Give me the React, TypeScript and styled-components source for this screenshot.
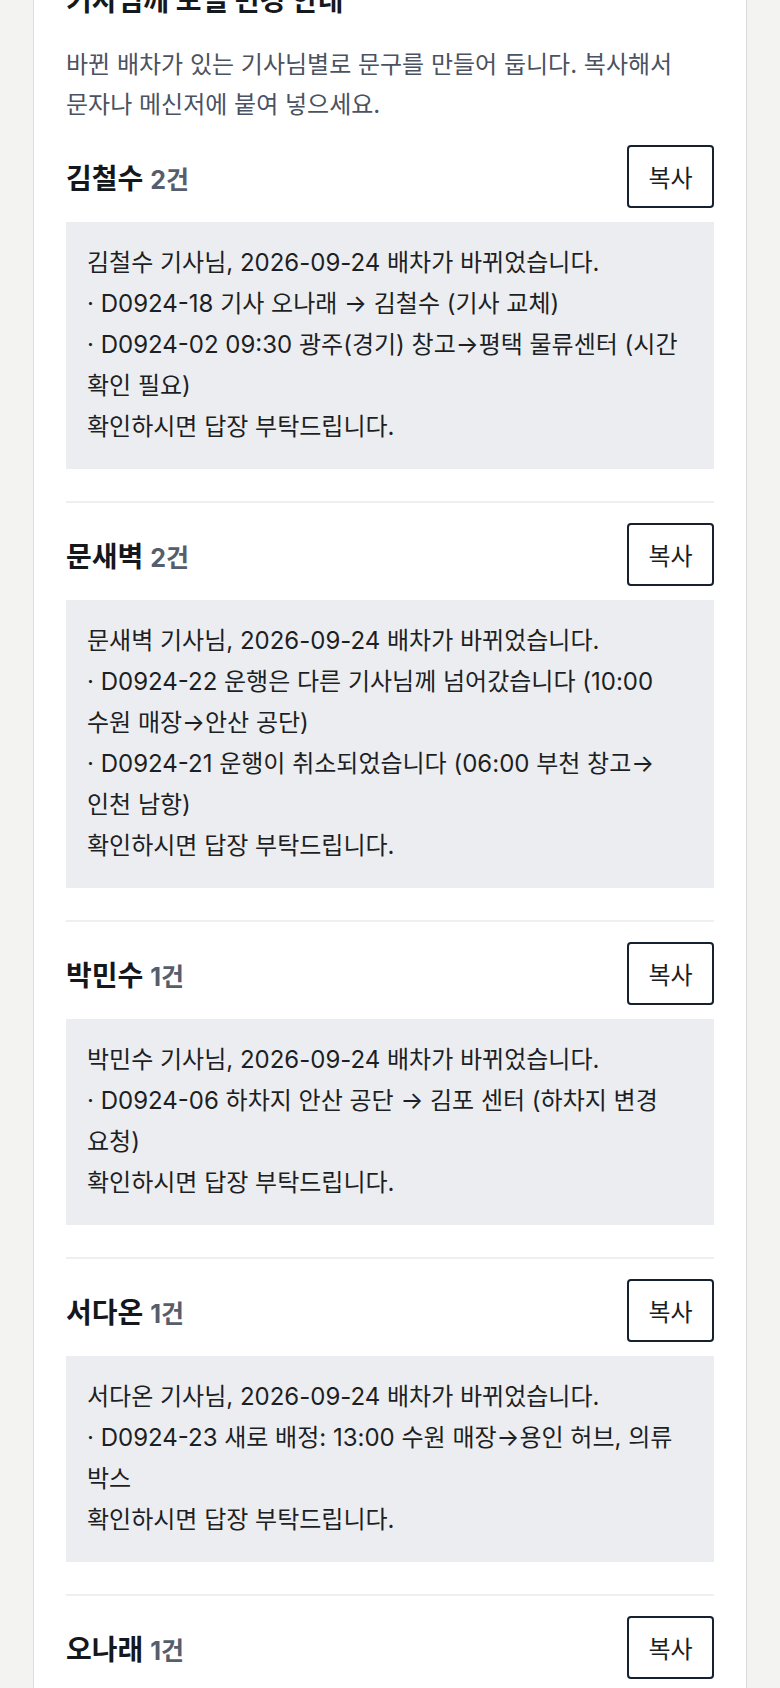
import styled, { createGlobalStyle } from "styled-components";

const GlobalStyle = createGlobalStyle`
  body {
    margin: 0;
    background: #f3f3f1;
    font-family: Inter, "Noto Sans CJK KR", "Noto Sans", sans-serif;
    color: #1c1f24;
  }
`;

type Notice = {
  driver: string;
  lines: string[];
};

const DATE = "2026-09-24";

const notices: Notice[] = [
  {
    driver: "김철수",
    lines: [
      "· D0924-18 기사 오나래 → 김철수 (기사 교체)",
      "· D0924-02 09:30 광주(경기) 창고→평택 물류센터 (시간 확인 필요)",
    ],
  },
  {
    driver: "문새벽",
    lines: [
      "· D0924-22 운행은 다른 기사님께 넘어갔습니다 (10:00 수원 매장→안산 공단)",
      "· D0924-21 운행이 취소되었습니다 (06:00 부천 창고→인천 남항)",
    ],
  },
  {
    driver: "박민수",
    lines: ["· D0924-06 하차지 안산 공단 → 김포 센터 (하차지 변경 요청)"],
  },
  {
    driver: "서다온",
    lines: ["· D0924-23 새로 배정: 13:00 수원 매장→용인 허브, 의류 박스"],
  },
  {
    driver: "오나래",
    lines: ["· D0924-18 운행은 다른 기사님께 넘어갔습니다 (07:30 평택 물류센터→김포 센터)"],
  },
];

const App = () => {
  return (
    <>
      <GlobalStyle />
      <Page>
        <Card>
          <Title>기사님께 보낼 변경 안내</Title>
          <Description>
            바뀐 배차가 있는 기사님별로 문구를 만들어 둡니다. 복사해서 문자나 메신저에 붙여 넣으세요.
          </Description>
          {notices.map((n) => (
            <Section key={n.driver}>
              <Header>
                <Name>
                  {n.driver}
                  <Count>{n.lines.length}건</Count>
                </Name>
                <CopyButton type="button">복사</CopyButton>
              </Header>
              <MessageBox>
                <Line>
                  {n.driver} 기사님, {DATE} 배차가 바뀌었습니다.
                </Line>
                {n.lines.map((l) => (
                  <Line key={l}>{l}</Line>
                ))}
                <Line>확인하시면 답장 부탁드립니다.</Line>
              </MessageBox>
            </Section>
          ))}
        </Card>
      </Page>
    </>
  );
};

export default App;

const Page = styled.div`
  padding: 0 33px;
`;

const Card = styled.div`
  margin-top: -17px;
  background: #fff;
  border-left: 1px solid #dcdcdc;
  border-right: 1px solid #dcdcdc;
  padding: 0 32px;
`;

const Title = styled.h2`
  margin: 0;
  font-size: 28px;
  line-height: 36px;
  font-weight: 700;
  color: #15181d;
`;

const Description = styled.p`
  margin: 26px 0 0;
  font-size: 24px;
  line-height: 40px;
  color: #4b5261;
  word-break: keep-all;
`;

const Section = styled.section`
  padding: 20px 0 32px;
  border-bottom: 2px solid #efeff0;
`;

const Header = styled.div`
  display: flex;
  align-items: center;
  justify-content: space-between;
`;

const Name = styled.div`
  font-size: 28px;
  font-weight: 700;
  color: #14171c;
  display: flex;
  align-items: baseline;
`;

const Count = styled.span`
  margin-left: 7px;
  font-size: 25px;
  font-weight: 700;
  color: #565d6b;
`;

const CopyButton = styled.button`
  height: 63px;
  width: 87px;
  padding: 0;
  background: #fff;
  border: 2px solid #17202e;
  border-radius: 4px;
  font-family: inherit;
  font-size: 24px;
  color: #1a1d22;
`;

const MessageBox = styled.div`
  margin-top: 14px;
  background: #ecedf0;
  padding: 20px 21px 22px;
  font-size: 24px;
  line-height: 41px;
  color: #1c1f24;
  word-break: keep-all;
`;

const Line = styled.div``;
